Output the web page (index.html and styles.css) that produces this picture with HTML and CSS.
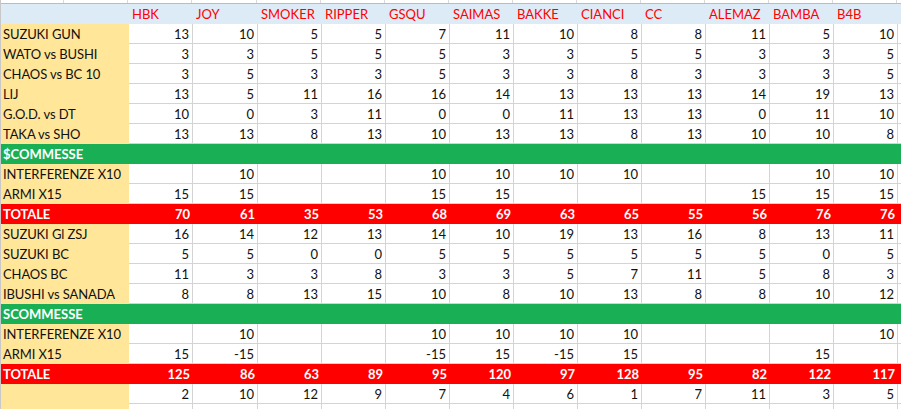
FILE: index.html
```html
<!DOCTYPE html>
<html>
<head>
<meta charset="utf-8">
<link rel="stylesheet" href="styles.css">
</head>
<body>
<div class="sheet">
  <div class="strip">
    <span></span><span></span><span></span><span></span><span></span><span></span><span></span><span></span><span></span><span></span><span></span><span></span><span></span><span></span><span class="end"></span>
  </div>
  <div class="row head">
    <span class="lab"></span><span>HBK</span><span>JOY</span><span>SMOKER</span><span>RIPPER</span><span>GSQU</span><span>SAIMAS</span><span>BAKKE</span><span>CIANCI</span><span>CC</span><span>ALEMAZ</span><span>BAMBA</span><span>B4B</span><span class="end"></span>
  </div>
  <div class="row"><span class="lab">SUZUKI GUN</span><span>13</span><span>10</span><span>5</span><span>5</span><span>7</span><span>11</span><span>10</span><span>8</span><span>8</span><span>11</span><span>5</span><span>10</span><span class="end"></span></div>
  <div class="row"><span class="lab">WATO vs BUSHI</span><span>3</span><span>3</span><span>5</span><span>5</span><span>5</span><span>3</span><span>3</span><span>5</span><span>5</span><span>3</span><span>3</span><span>5</span><span class="end"></span></div>
  <div class="row"><span class="lab">CHAOS vs BC 10</span><span>3</span><span>5</span><span>3</span><span>3</span><span>5</span><span>3</span><span>3</span><span>8</span><span>3</span><span>3</span><span>3</span><span>5</span><span class="end"></span></div>
  <div class="row"><span class="lab">LIJ</span><span>13</span><span>5</span><span>11</span><span>16</span><span>16</span><span>14</span><span>13</span><span>13</span><span>13</span><span>14</span><span>19</span><span>13</span><span class="end"></span></div>
  <div class="row"><span class="lab">G.O.D. vs DT</span><span>10</span><span>0</span><span>3</span><span>11</span><span>0</span><span>0</span><span>11</span><span>13</span><span>13</span><span>0</span><span>11</span><span>10</span><span class="end"></span></div>
  <div class="row"><span class="lab">TAKA vs SHO</span><span>13</span><span>13</span><span>8</span><span>13</span><span>10</span><span>13</span><span>13</span><span>8</span><span>13</span><span>10</span><span>10</span><span>8</span><span class="end"></span></div>
  <div class="band green">$COMMESSE</div>
  <div class="row"><span class="lab">INTERFERENZE X10</span><span></span><span>10</span><span></span><span></span><span>10</span><span>10</span><span>10</span><span>10</span><span></span><span></span><span>10</span><span>10</span><span class="end"></span></div>
  <div class="row"><span class="lab">ARMI X15</span><span>15</span><span>15</span><span></span><span></span><span>15</span><span>15</span><span></span><span></span><span></span><span>15</span><span>15</span><span>15</span><span class="end"></span></div>
  <div class="row total"><span class="lab">TOTALE</span><span>70</span><span>61</span><span>35</span><span>53</span><span>68</span><span>69</span><span>63</span><span>65</span><span>55</span><span>56</span><span>76</span><span>76</span><span class="end"></span></div>
  <div class="row"><span class="lab">SUZUKI Gl ZSJ</span><span>16</span><span>14</span><span>12</span><span>13</span><span>14</span><span>10</span><span>19</span><span>13</span><span>16</span><span>8</span><span>13</span><span>11</span><span class="end"></span></div>
  <div class="row"><span class="lab">SUZUKI BC</span><span>5</span><span>5</span><span>0</span><span>0</span><span>5</span><span>5</span><span>5</span><span>5</span><span>5</span><span>5</span><span>0</span><span>5</span><span class="end"></span></div>
  <div class="row"><span class="lab">CHAOS BC</span><span>11</span><span>3</span><span>3</span><span>8</span><span>3</span><span>3</span><span>5</span><span>7</span><span>11</span><span>5</span><span>8</span><span>3</span><span class="end"></span></div>
  <div class="row"><span class="lab">IBUSHI vs SANADA</span><span>8</span><span>8</span><span>13</span><span>15</span><span>10</span><span>8</span><span>10</span><span>13</span><span>8</span><span>8</span><span>10</span><span>12</span><span class="end"></span></div>
  <div class="band green">SCOMMESSE</div>
  <div class="row"><span class="lab">INTERFERENZE X10</span><span></span><span>10</span><span></span><span></span><span>10</span><span>10</span><span>10</span><span>10</span><span></span><span></span><span></span><span>10</span><span class="end"></span></div>
  <div class="row"><span class="lab">ARMI X15</span><span>15</span><span>-15</span><span></span><span></span><span>-15</span><span>15</span><span>-15</span><span>15</span><span></span><span></span><span>15</span><span></span><span class="end"></span></div>
  <div class="row total"><span class="lab">TOTALE</span><span>125</span><span>86</span><span>63</span><span>89</span><span>95</span><span>120</span><span>97</span><span>128</span><span>95</span><span>82</span><span>122</span><span>117</span><span class="end"></span></div>
  <div class="row"><span class="lab"></span><span>2</span><span>10</span><span>12</span><span>9</span><span>7</span><span>4</span><span>6</span><span>1</span><span>7</span><span>11</span><span>3</span><span>5</span><span class="end"></span></div>
  <div class="row"><span class="lab"></span><span></span><span></span><span></span><span></span><span></span><span></span><span></span><span></span><span></span><span></span><span></span><span></span><span class="end"></span></div>
</div>
</body>
</html>
```

FILE: styles.css
```css
html, body {
  margin: 0;
  padding: 0;
  background: #ffffff;
}

body {
  font-family: Lato, "Liberation Sans", sans-serif;
  font-size: 13px;
  color: #111111;
  width: 901px;
  height: 409px;
  overflow: hidden;
}

.sheet {
  display: flex;
  flex-direction: column;
  border-left: 1px solid #c8c8c8;
}

.strip {
  display: grid;
  grid-template-columns: 63px 64px 64px 65px repeat(10, 64px) 1fr;
  height: 4px;
  box-sizing: border-box;
  border-bottom: 1px solid #bcbcbc;
}

.strip span {
  border-right: 1px solid #d9d9d9;
}

.strip span.end {
  border-right: none;
}

.row {
  display: grid;
  grid-template-columns: 128px 64px 65px repeat(10, 64px) 1fr;
  height: 20px;
  flex: none;
}

.row span {
  box-sizing: border-box;
  height: 20px;
  padding: 2px 3px 0 3px;
  line-height: 17px;
  text-align: right;
  white-space: nowrap;
  overflow: hidden;
  border-right: 1px solid #d4d4d4;
  border-bottom: 1px solid #d4d4d4;
}

.row span.end {
  border-right: none;
}

.row span.lab {
  background: #ffe699;
  text-align: left;
  padding-left: 2px;
  border: none;
  letter-spacing: -0.1px;
  overflow: visible;
}

.row.head {
  background: #ddebf7;
}

.row.head span {
  border: none;
  text-align: left;
  color: #ff0000;
}

.row.head span.lab {
  background: transparent;
}

.row.total {
  background: #ff0000;
  color: #ffffff;
  font-weight: bold;
}

.row.total span {
  border: none;
}

.row.total span.lab {
  background: transparent;
}

.band {
  height: 20px;
  box-sizing: border-box;
  padding: 2px 2px 0 2px;
  line-height: 17px;
  font-weight: bold;
  color: #ffffff;
  flex: none;
}

.green {
  background: #19af54;
}
```
